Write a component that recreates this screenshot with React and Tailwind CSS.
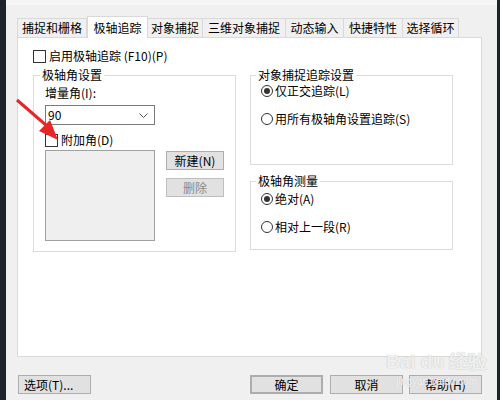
const TABS = [
  { label: "捕捉和栅格", w: "w-[70px]" },
  { label: "极轴追踪", w: "w-[61px]", active: true },
  { label: "对象捕捉", w: "w-[55px]" },
  { label: "三维对象捕捉", w: "w-[83px]" },
  { label: "动态输入", w: "w-[58px]" },
  { label: "快捷特性", w: "w-[59px]" },
  { label: "选择循环", w: "w-[56px]" },
];

function CheckBox() {
  return <span className="inline-block w-[13px] h-[13px] border border-[#333] bg-white shrink-0" />;
}

function Radio({ on }) {
  return (
    <span className="w-[12px] h-[12px] rounded-full border border-[#333] bg-white flex items-center justify-center shrink-0">
      {on && <span className="w-[6px] h-[6px] rounded-full bg-[#333]" />}
    </span>
  );
}

function Group({ title, className, children }) {
  return (
    <fieldset className={"border border-[#dcdcdc] " + className}>
      <legend className="-ml-[5px] px-[2px] leading-[16px]">{title}</legend>
      {children}
    </fieldset>
  );
}

function Btn({ children, className = "" }) {
  return (
    <div className={"h-[19px] flex items-center justify-center bg-[#e1e1e1] border border-[#adadad] " + className}>
      {children}
    </div>
  );
}

export default function App() {
  return (
    <div className="relative w-[500px] h-[400px] flex overflow-hidden text-[12px] leading-[16px] text-black font-['Noto_Sans_CJK_SC',sans-serif]">
      <div className="w-[6px] bg-[#1e222a]" />
      <div className="w-[491px] bg-[#f0f0f0] flex flex-col">
        <div className="h-[5px] bg-[#f6f6f6]" />
        {/* tabs */}
        <div className="ml-[11px] mt-[10px] h-[22px] flex items-end relative z-10">
          {TABS.map((t) =>
            t.active ? (
              <div key={t.label} className={t.w + " h-[22px] -mb-px bg-white border border-b-0 border-[#d9d9d9] flex items-center justify-center"}>
                {t.label}
              </div>
            ) : (
              <div key={t.label} className={t.w + " h-[19px] bg-[#f0f0f0] border border-b-0 border-l-0 first:border-l border-[#d9d9d9] flex items-center justify-center"}>
                {t.label}
              </div>
            )
          )}
        </div>
        {/* panel */}
        <div className="ml-[11px] w-[465px] h-[320px] border border-[#d9d9d9] bg-white pl-[15px] pt-[11px]">
          <div className="flex items-center h-[14px] gap-[3px]">
            <CheckBox />
            <span>启用极轴追踪 (F10)(P)</span>
          </div>
          <div className="flex mt-[4px]">
            <Group title="极轴角设置" className="w-[203px] pl-[11px] pb-[10px]">
              <div className="mt-[2px]">增量角(I):</div>
              <div className="mt-[4px] w-[110px] h-[20px] border border-[#7a7a7a] bg-white flex items-center justify-between pl-[2px] pr-[6px]">
                <span className="text-[12px]">90</span>
                <svg width="9" height="5" viewBox="0 0 9 5">
                  <polyline points="0.5,0.5 4.5,4.5 8.5,0.5" fill="none" stroke="#555" strokeWidth="1" />
                </svg>
              </div>
              <div className="mt-[7px] h-[16px] flex items-center gap-[3px]">
                <CheckBox />
                <span>附加角(D)</span>
              </div>
              <div className="mt-[2px] flex">
                <div className="w-[110px] h-[91px] border border-[#a0a0a0] bg-[#efefef]" />
                <div className="ml-[11px] flex flex-col">
                  <Btn className="w-[58px] mt-px">新建(N)</Btn>
                  <Btn className="w-[58px] mt-[8px] bg-[#cccccc] border-[#bfbfbf] text-[#8a8a8a]">删除</Btn>
                </div>
              </div>
            </Group>
            <div className="ml-[14px] flex flex-col">
              <Group title="对象捕捉追踪设置" className="w-[203px] pl-[10px] pb-[37px]">
                <div className="h-[16px] flex items-center gap-[2px]">
                  <Radio on />
                  <span>仅正交追踪(L)</span>
                </div>
                <div className="mt-[12px] h-[16px] flex items-center gap-[2px]">
                  <Radio />
                  <span>用所有极轴角设置追踪(S)</span>
                </div>
              </Group>
              <Group title="极轴角测量" className="mt-[8px] w-[203px] pl-[10px] pb-[14px]">
                <div className="mt-[2px] h-[16px] flex items-center gap-[2px]">
                  <Radio on />
                  <span>绝对(A)</span>
                </div>
                <div className="mt-[12px] h-[16px] flex items-center gap-[2px]">
                  <Radio />
                  <span>相对上一段(R)</span>
                </div>
              </Group>
            </div>
          </div>
        </div>
        {/* bottom buttons */}
        <div className="mt-[18px] ml-[12px] flex">
          <Btn className="w-[73px] justify-start pl-[5px]">选项(T)...</Btn>
          <Btn className="ml-[159px] w-[73px] border-2 border-[#0078d7]">确定</Btn>
          <Btn className="ml-[7px] w-[73px]">取消</Btn>
          <Btn className="ml-[6px] w-[73px]">帮助(H)</Btn>
        </div>
      </div>
      <div className="flex-1 bg-[#1e222a]" />

      {/* red annotation arrow */}
      <svg className="absolute left-0 top-0 pointer-events-none" width="500" height="400">
        <line x1="17" y1="100" x2="47" y2="126" stroke="#e8262a" strokeWidth="3" />
        <polygon points="58,140 39,131 50,120" fill="#e8262a" />
      </svg>

      {/* watermark */}
      <div className="absolute left-[386px] top-[352px] pointer-events-none flex flex-col items-center text-white/80">
        <span className="text-[19px] leading-[20px] font-bold font-['Liberation_Sans',sans-serif] [text-shadow:0_0_1px_#aaa]">Bai du 经验</span>
        <span className="mt-[4px] text-[10px] leading-[12px] font-['Liberation_Sans',sans-serif] [text-shadow:0_0_1px_#bbb]">jingyan.baidu.com</span>
      </div>
    </div>
  );
}
